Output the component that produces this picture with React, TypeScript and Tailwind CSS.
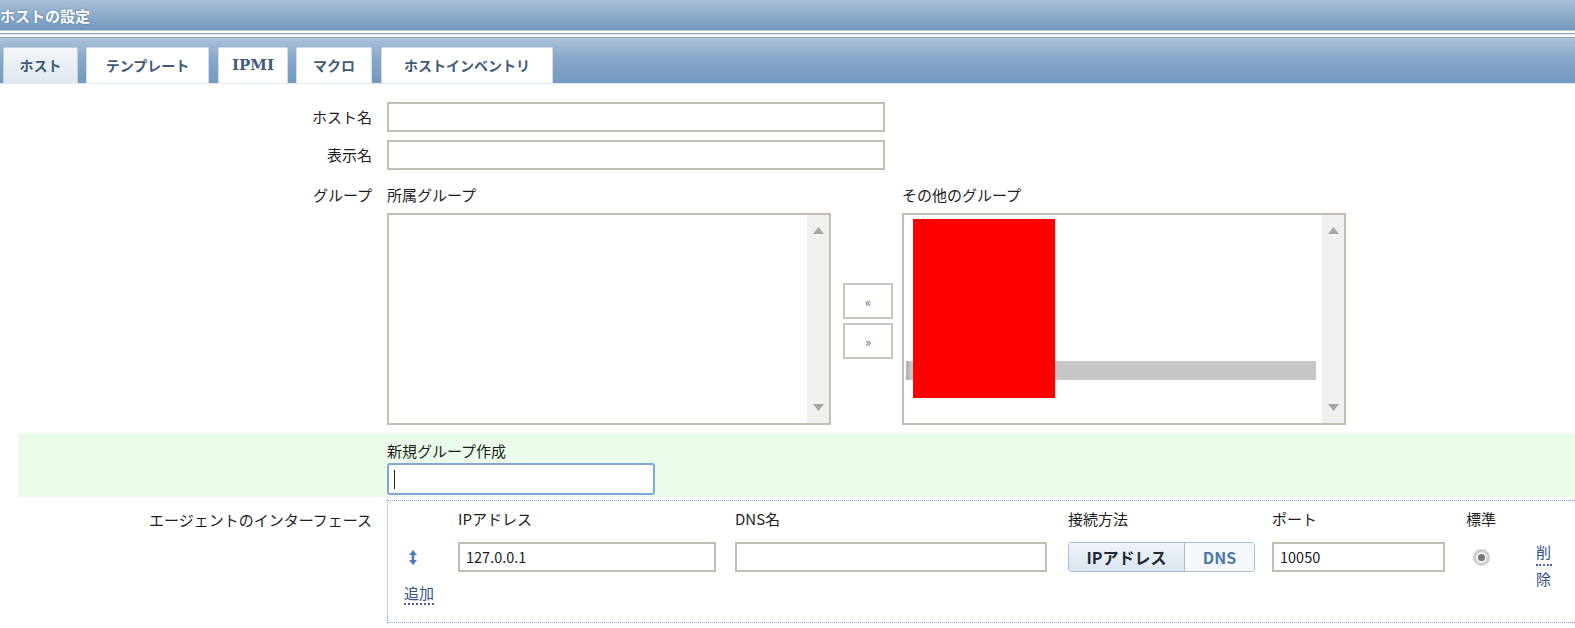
import React from "react";

function TextInput({ w, value = "" }: { w: string; value?: string }) {
  return (
    <div
      className={`${w} h-[30px] bg-white border-2 border-[#c2beb3] flex items-center pl-[6px] text-[14.5px] text-[#1a1a1a]`}
    >
      {value}
    </div>
  );
}

function ListBox({ children }: { children?: React.ReactNode }) {
  return (
    <div className="relative w-[444px] h-[212px] border-2 border-[#c2beb3] bg-white flex justify-end">
      {children}
      <div className="w-[22px] h-full bg-[#f0f0f0] flex flex-col items-center justify-between py-[12px]">
        <svg width="11" height="7" viewBox="0 0 11 7">
          <path d="M0 7 L5.5 0 L11 7 Z" fill="#a6a6a6" />
        </svg>
        <svg width="11" height="7" viewBox="0 0 11 7">
          <path d="M0 0 L5.5 7 L11 0 Z" fill="#a6a6a6" />
        </svg>
      </div>
    </div>
  );
}

const tabs = [
  { label: "ホスト", w: "w-[75px]", ml: "ml-[3px]", active: true },
  { label: "テンプレート", w: "w-[123px]", ml: "ml-[8px]", active: false },
  { label: "IPMI", w: "w-[70px]", ml: "ml-[9px]", active: false },
  { label: "マクロ", w: "w-[76px]", ml: "ml-[8px]", active: false },
  { label: "ホストインベントリ", w: "w-[172px]", ml: "ml-[9px]", active: false },
];

export default function App() {
  return (
    <div className="w-full h-[628px] bg-white overflow-hidden font-['Noto_Sans_CJK_JP','Liberation_Sans',sans-serif] text-[#1e1e1e]">
      {/* Title bar */}
      <div className="h-[30px] bg-[linear-gradient(to_bottom,#a9c0d8,#7399c0)] flex items-center">
        <span className="text-white font-bold text-[15px] leading-none [text-shadow:0_0_2px_rgba(40,70,110,0.6)]">
          ホストの設定
        </span>
      </div>
      {/* double line separator */}
      <div className="flex flex-col">
        <div className="h-px bg-[#b9cadb]" />
        <div className="h-[2px] bg-white" />
        <div className="h-px bg-[#93a9c1]" />
        <div className="h-[1px] bg-[#dfe7ef]" />
        <div className="h-[2px] bg-white" />
        <div className="h-px bg-[#8ea6c0]" />
        <div className="h-px bg-[#b3c5d8]" />
      </div>
      {/* Tab bar */}
      <div className="h-[45px] bg-[linear-gradient(to_bottom,#a9c0d8,#86a7c9_45%,#7399c0)] flex items-end border-b border-[#dfe8f0]">
        {tabs.map((t) => (
          <div
            key={t.label}
            className={`${t.w} ${t.ml} shrink-0 h-[36px] flex items-center justify-center border border-b-0 rounded-t-[2px] text-[14px] font-bold text-[#3f5a78] ${
              t.active
                ? "bg-[linear-gradient(to_bottom,#f3f6f9,#dfe7ef)] border-[#c3d1df]"
                : "bg-white border-[#d3dde7]"
            }`}
          >
            {t.label === "IPMI" ? <span className="text-[15px] font-['DejaVu_Serif',serif] font-bold text-[13px]">IPMI</span> : t.label}
          </div>
        ))}
      </div>

      {/* Form */}
      <div className="pt-[18px] text-[15px]">
        <div className="flex items-center">
          <div className="w-[372px] shrink-0 text-right">ホスト名</div>
          <div className="ml-[15px]">
            <TextInput w="w-[498px]" />
          </div>
        </div>
        <div className="flex items-center mt-[8px]">
          <div className="w-[372px] shrink-0 text-right">表示名</div>
          <div className="ml-[15px]">
            <TextInput w="w-[498px]" />
          </div>
        </div>

        {/* Groups */}
        <div className="flex mt-[15px]">
          <div className="w-[372px] shrink-0 text-right h-[20px] leading-[20px]">グループ</div>
          <div className="ml-[15px] flex">
            <div className="flex flex-col">
              <div className="h-[20px] leading-[20px]">所属グループ</div>
              <div className="mt-[8px]">
                <ListBox />
              </div>
            </div>
            <div className="ml-[12px] pt-[98px] flex flex-col gap-[4px]">
              <div className="w-[50px] h-[36px] border-2 border-[#c9c5bb] bg-white flex items-center justify-center text-[13px] text-[#6a6aa8] leading-none">
                «
              </div>
              <div className="w-[50px] h-[36px] border-2 border-[#c9c5bb] bg-white flex items-center justify-center text-[13px] text-[#6a6aa8] leading-none">
                »
              </div>
            </div>
            <div className="ml-[9px] flex flex-col">
              <div className="h-[20px] leading-[20px]">その他のグループ</div>
              <div className="mt-[8px]">
                <ListBox>
                  <div className="absolute left-[2px] top-[146px] w-[410px] h-[19px] bg-[#c6c6c6] border-l-[3px] border-[#b4b4b4]" />
                  <div className="absolute left-[9px] top-[4px] w-[142px] h-[179px] bg-[#ff0000]" />
                </ListBox>
              </div>
            </div>
          </div>
        </div>

        {/* New group */}
        <div className="mt-[8px] ml-[18px] h-[64px] bg-[#ebfdea] flex">
          <div className="w-[354px] shrink-0" />
          <div className="ml-[15px] pt-[8px] flex flex-col">
            <div className="h-[20px] leading-[20px]">新規グループ作成</div>
            <div className="mt-[2px]">
              <div className="w-[268px] h-[32px] bg-white border-2 border-[#82a8d6] rounded-[3px] flex items-center pl-[5px]">
                <span className="block w-px h-[19px] bg-[#222]" />
              </div>
            </div>
          </div>
        </div>

        {/* Agent interfaces */}
        <div className="flex mt-[3px]">
          <div className="w-[372px] shrink-0 text-right pt-[10px] leading-[20px]">エージェントのインターフェース</div>
          <div className="ml-[15px] flex-1 h-[123px] border-t border-l border-b border-dotted border-[#8ea4cc] pt-[8px]">
            <div className="grid grid-cols-[70px_277px_333px_204px_194px_70px_20px] grid-rows-[20px_30px_auto] gap-y-[13px]">
              <div />
              <div className="leading-[20px]">IPアドレス</div>
              <div className="leading-[20px]">DNS名</div>
              <div className="leading-[20px]">接続方法</div>
              <div className="leading-[20px]">ポート</div>
              <div className="leading-[20px]">標準</div>
              <div />

              <div className="flex items-center pl-[21px]">
                <svg width="8" height="15" viewBox="0 0 8 15">
                  <path d="M4 0 L8 5 L5.3 5 L5.3 10 L8 10 L4 15 L0 10 L2.7 10 L2.7 5 L0 5 Z" fill="#4d7cb0" />
                </svg>
              </div>
              <div>
                <TextInput w="w-[258px]" value="127.0.0.1" />
              </div>
              <div>
                <TextInput w="w-[312px]" />
              </div>
              <div>
                <div className="w-[187px] h-[30px] flex border border-[#a9bdd5] rounded-[3px] overflow-hidden font-bold text-[16px]">
                  <div className="w-[116px] h-full flex items-center justify-center bg-[linear-gradient(to_bottom,#eef3f8,#dce5ef)] border-r border-[#a9bdd5] text-[#1f2a38]">
                    IPアドレス
                  </div>
                  <div className="flex-1 h-full flex items-center justify-center bg-[#f5f8fc] text-[#4f79a8]">
                    DNS
                  </div>
                </div>
              </div>
              <div>
                <TextInput w="w-[173px]" value="10050" />
              </div>
              <div className="flex items-center pl-[7px]">
                <div className="w-[17px] h-[17px] rounded-full border-[3px] border-[#cfcfcf] bg-[#f2f2f2] flex items-center justify-center">
                  <div className="w-[7px] h-[7px] rounded-full bg-[#777]" />
                </div>
              </div>
              <div className="row-span-2 flex flex-col text-[#34508a] text-[15px] -mt-[2px]">
                <span className="border-b-2 border-dotted border-[#4a5fa0] leading-[24px] w-[16px]">削</span>
                <span className="leading-[26px]">除</span>
              </div>

              <div className="pl-[16px] -mt-[3px]">
                <span className="text-[#34508a] leading-[20px] border-b-2 border-dotted border-[#4a5fa0] inline-block">
                  追加
                </span>
              </div>
            </div>
          </div>
        </div>
      </div>
    </div>
  );
}
